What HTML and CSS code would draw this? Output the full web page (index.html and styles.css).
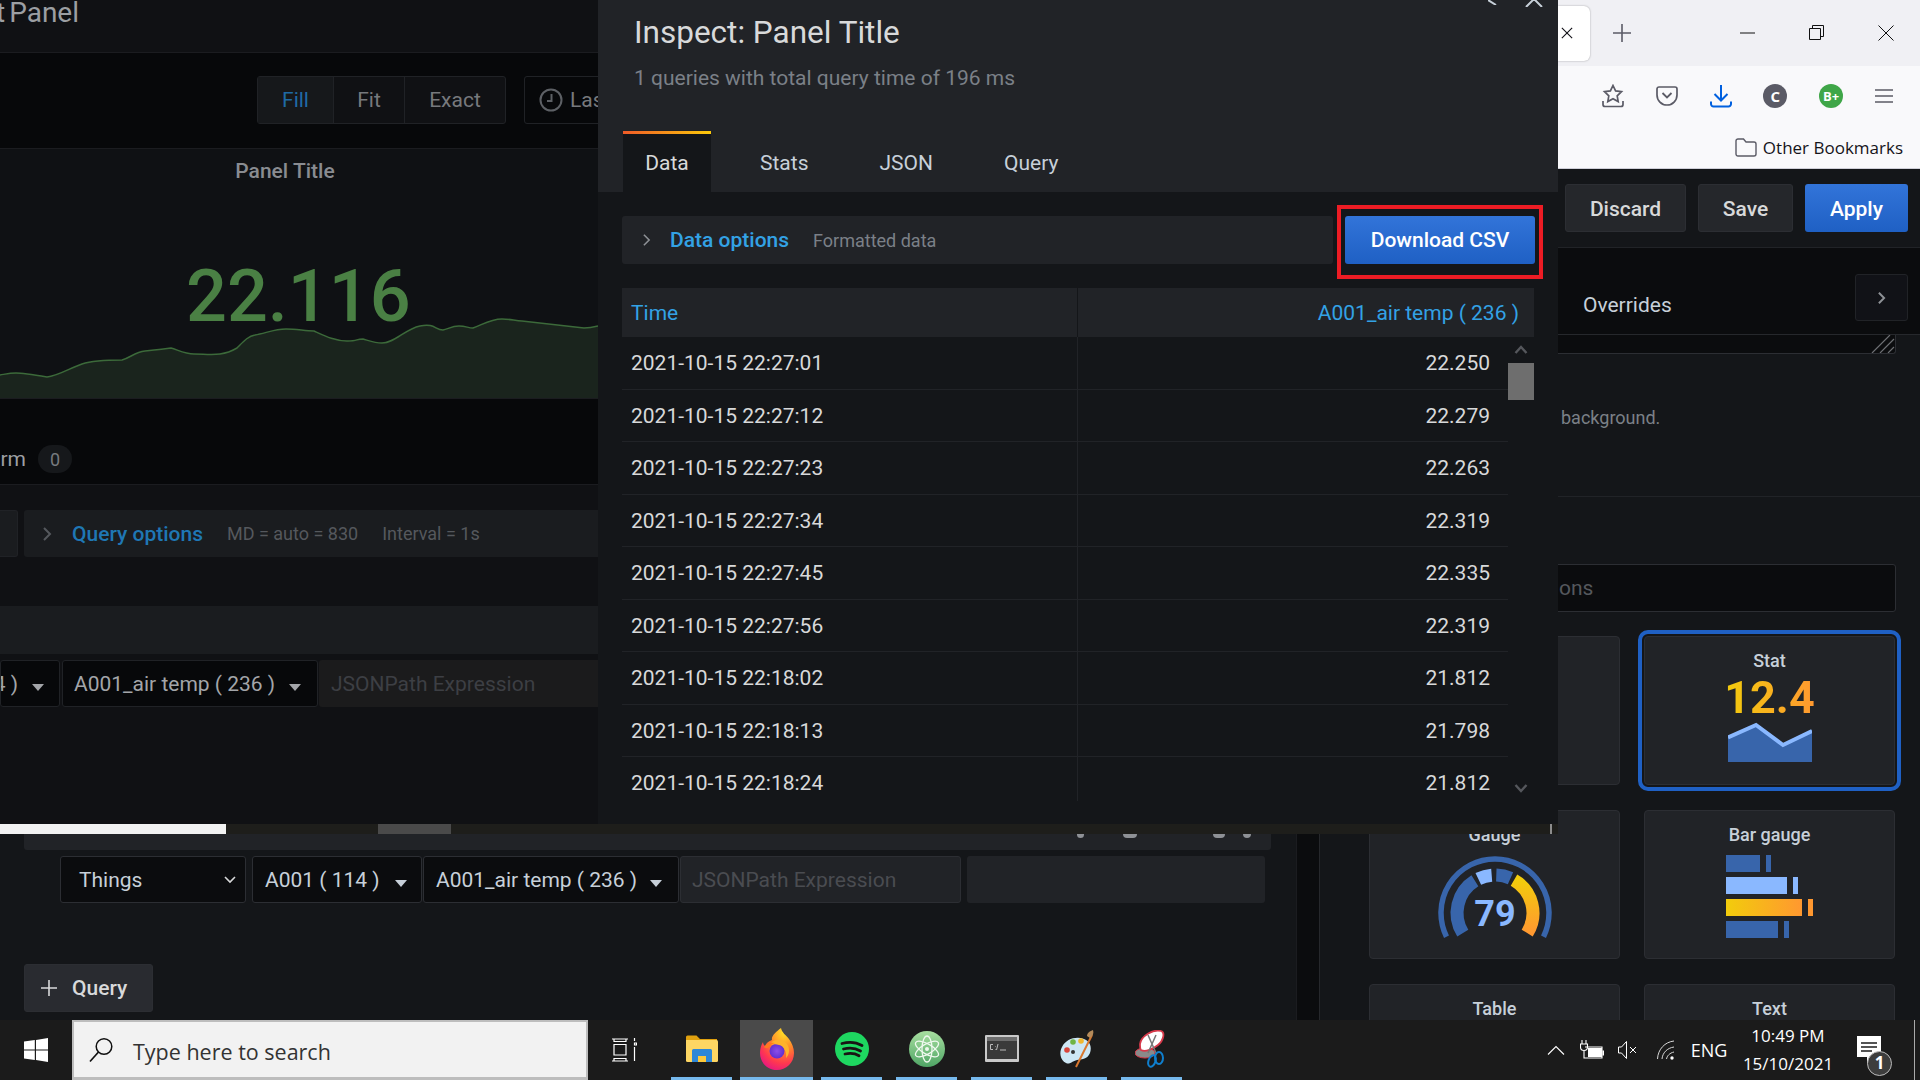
FILE: index.html
```html
<!DOCTYPE html>
<html lang="en">
<head>
<meta charset="utf-8">
<title>Inspect: Panel Title</title>
<link rel="stylesheet" href="styles.css">
</head>
<body>
<div class="desktop">

  <section class="win dim-pane">
    <header class="dim-head"><h1 class="dim-title">t Panel</h1></header>
    <div class="dim-toolbar">
      <div class="btn-group">
        <span class="seg seg-fill">Fill</span><span class="seg seg-fit">Fit</span><span class="seg seg-exact">Exact</span>
      </div>
      <div class="timepick">
        <svg class="ico-clock" viewBox="0 0 24 24" width="24" height="24"><circle cx="12" cy="12" r="10.500" fill="none" stroke="#5d6065" stroke-width="2"/><path d="M12.500 6v7H8" fill="none" stroke="#5d6065" stroke-width="2"/></svg>
        <span>Las</span>
      </div>
    </div>
    <div class="dim-panel">
      <div class="panel-title">Panel Title</div>
      <div class="panel-value">22.116</div>
      <svg class="spark" viewBox="0 0 598 100" width="598" height="100" preserveAspectRatio="none">
        <path fill="#1a241d" d="M0 77C6 76 10 75 16 75S35 77 47 79C58 78 70 70 82 66S110 62 122 62C130 60 135 54 145 53S165 51 171 50C178 52 185 56 194 56S212 57 220 56C228 55 232 53 237 50C243 44 248 38 255 37C266 35 275 31 286 31S305 33 314 33C325 38 335 43 347 43S355 41 363 41C370 43 375 45 382 45C395 45 405 31 420 28S435 32 443 32C448 31 452 28 459 28S468 30 473 30C482 27 490 21 502 21C510 21 516 23 522 23L584 30C590 30 594 29 598 28V100H0Z"/>
        <path fill="none" stroke="#3c6a3a" stroke-width="1.500" d="M0 77C6 76 10 75 16 75S35 77 47 79C58 78 70 70 82 66S110 62 122 62C130 60 135 54 145 53S165 51 171 50C178 52 185 56 194 56S212 57 220 56C228 55 232 53 237 50C243 44 248 38 255 37C266 35 275 31 286 31S305 33 314 33C325 38 335 43 347 43S355 41 363 41C370 43 375 45 382 45C395 45 405 31 420 28S435 32 443 32C448 31 452 28 459 28S468 30 473 30C482 27 490 21 502 21C510 21 516 23 522 23L584 30C590 30 594 29 598 28"/>
      </svg>
    </div>
    <div class="dim-tabs">
      <span class="dim-tab-label">rm</span><span class="dim-badge">0</span>
    </div>
    <div class="dim-body">
      <div class="dim-opts">
        <div class="dim-stub"></div>
        <div class="dim-optbar">
          <svg class="ico-chev" viewBox="0 0 10 16" width="10" height="16"><path d="M2 2l6 6-6 6" fill="none" stroke="#55585d" stroke-width="2"/></svg>
          <span class="dim-link">Query options</span>
          <span class="dim-meta">MD = auto = 830</span>
          <span class="dim-meta">Interval = 1s</span>
        </div>
      </div>
      <div class="dim-strip"></div>
      <div class="dim-selects">
        <div class="sel dim-sel sel-a"><span class="sel-text">4 )</span><i class="caret"></i></div>
        <div class="sel dim-sel sel-b"><span class="sel-text">A001_air temp ( 236 )</span><i class="caret"></i></div>
        <div class="dim-json">JSONPath Expression</div>
      </div>
    </div>
  </section>

  <section class="win low-pane">
    <div class="low-strip">
      <span class="frag frag-a"></span><span class="frag frag-b"></span><span class="frag frag-c"></span><span class="frag frag-d"></span>
    </div>
    <div class="low-row">
      <div class="sel low-things"><span class="sel-text">Things</span>
        <svg viewBox="0 0 12 8" width="12" height="8"><path d="M1 1l5 5 5-5" fill="none" stroke="#d8d9da" stroke-width="1.600"/></svg>
      </div>
      <div class="sel low-a"><span class="sel-text">A001 ( 114 )</span><i class="caret"></i></div>
      <div class="sel low-b"><span class="sel-text">A001_air temp ( 236 )</span><i class="caret"></i></div>
      <div class="low-json">JSONPath Expression</div>
      <div class="low-empty"></div>
    </div>
    <button class="btn-query" type="button">
      <svg viewBox="0 0 18 18" width="18" height="18"><path d="M9 1v16M1 9h16" stroke="#d8d9da" stroke-width="1.600"/></svg>
      <span>Query</span>
    </button>
  </section>

  <div class="win gutter"></div>

  <aside class="win right-pane">
    <div class="rp-actions">
      <span class="btn btn-sec btn-discard">Discard</span>
      <span class="btn btn-sec btn-save">Save</span>
      <span class="btn btn-pri btn-apply">Apply</span>
    </div>
    <div class="rp-tabs">
      <span class="rp-tab">Overrides</span>
      <span class="rp-tabbtn"><svg viewBox="0 0 10 16" width="9" height="14"><path d="M2 2l6 6-6 6" fill="none" stroke="#8e9196" stroke-width="2.200"/></svg></span>
    </div>
    <div class="rp-resize">
      <svg viewBox="0 0 24 18" width="24" height="18"><path d="M1 18L19 0M9 18L23 4M17 18l6-6" stroke="#6d6f73" stroke-width="1.200"/></svg>
    </div>
    <p class="rp-note">background.</p>
    <div class="rp-rule"></div>
    <div class="rp-search"><span>ons</span></div>
    <div class="cards">
      <div class="card"></div>
      <div class="card card-on">
        <div class="card-title">Stat</div>
        <div class="stat-num">12.4</div>
        <svg viewBox="0 0 84 40" width="84" height="40" class="stat-chart"><path fill="#3865ab" d="M0 14L28 2 55 22 84 8V40H0Z"/><path fill="none" stroke="#8ab8ff" stroke-width="4" d="M0 15.500L28 3 55 23 84 9"/></svg>
      </div>
      <div class="card">
        <div class="card-title">Gauge</div>
        <svg class="gauge" viewBox="0 0 120 90" width="120" height="90">
          <defs><linearGradient id="gg" x1="0" y1="0" x2="0" y2="1"><stop offset="0" stop-color="#f2cc0c"/><stop offset="1" stop-color="#ff9830"/></linearGradient></defs>
          <path d="M11.500 80.700A54 54 0 1 1 108.500 80.700" fill="none" stroke="#3865ab" stroke-width="5.500"/>
          <path d="M27.800 77.100A38 38 0 0 1 39.900 24.800" fill="none" stroke="#3865ab" stroke-width="13"/>
          <path d="M43.300 22.800A38 38 0 0 1 56.700 19.200" fill="none" stroke="#8ab8ff" stroke-width="13"/>
          <path d="M61.300 19A38 38 0 0 1 75.500 22.300" fill="none" stroke="#3865ab" stroke-width="13"/>
          <path d="M79 24.100A38 38 0 0 1 92.200 77.100" fill="none" stroke="url(#gg)" stroke-width="13"/>
          <text x="60" y="70" text-anchor="middle" class="gauge-num">79</text>
        </svg>
      </div>
      <div class="card">
        <div class="card-title">Bar gauge</div>
        <div class="bars">
          <div class="bar-row"><span class="bar b-blue b1"></span><span class="tick b-blue"></span></div>
          <div class="bar-row"><span class="bar b-light b2"></span><span class="tick b-light"></span></div>
          <div class="bar-row"><span class="bar b-warm b3"></span><span class="tick b-orange"></span></div>
          <div class="bar-row"><span class="bar b-blue b4"></span><span class="tick b-blue"></span></div>
        </div>
      </div>
      <div class="card"><div class="card-title">Table</div></div>
      <div class="card"><div class="card-title">Text</div></div>
    </div>
  </aside>

  <section class="win chrome">
    <div class="ch-tabs">
      <div class="ch-tab"><svg viewBox="0 0 14 14" width="12" height="12"><path d="M1 1l12 12M13 1L1 13" stroke="#15141a" stroke-width="1.300"/></svg></div>
      <svg class="ch-plus" viewBox="0 0 18 18" width="18" height="18"><path d="M9 0v18M0 9h18" stroke="#5b5b66" stroke-width="1.600"/></svg>
      <div class="ch-winctl">
        <svg viewBox="0 0 16 16" width="16" height="16"><path d="M0 8h15" stroke="#111" stroke-width="1"/></svg>
        <svg viewBox="0 0 16 16" width="16" height="16"><path d="M3.500 3V.5h11v11H12M.5 3.500h11v11H.5z" fill="none" stroke="#111" stroke-width="1"/></svg>
        <svg viewBox="0 0 16 16" width="16" height="16"><path d="M.5.5l15 15M15.500.5L.5 15.500" stroke="#111" stroke-width="1"/></svg>
      </div>
    </div>
    <div class="ch-tools">
      <div class="ch-icons">
        <svg viewBox="0 0 22 24" width="22" height="24"><path d="M11 1.500l2.600 5.400 5.900.8-4.300 4.100 1 5.800-5.200-2.800-5.200 2.800 1-5.800L2.500 7.700l5.900-.8z" fill="none" stroke="#5b5b66" stroke-width="1.700"/><path d="M1 17v3.500a2 2 0 0 0 2 2h16a2 2 0 0 0 2-2V17" fill="none" stroke="#5b5b66" stroke-width="1.700"/></svg>
        <svg viewBox="0 0 22 20" width="22" height="20"><path d="M3 1h16a2 2 0 0 1 2 2v6a10 10 0 0 1-20 0V3a2 2 0 0 1 2-2z" fill="none" stroke="#5b5b66" stroke-width="1.700"/><path d="M6.500 7l4.500 4.500L15.500 7" fill="none" stroke="#5b5b66" stroke-width="1.800"/></svg>
        <svg viewBox="0 0 22 24" width="22" height="24"><path d="M11 1v15M4.500 10l6.500 6.500 6.500-6.500" fill="none" stroke="#0060df" stroke-width="2"/><path d="M1 17.500v2.500a2.500 2.500 0 0 0 2.500 2.500h15a2.500 2.500 0 0 0 2.500-2.500v-2.500" fill="none" stroke="#0060df" stroke-width="2"/></svg>
        <span class="ext ext-c">C</span>
        <span class="ext ext-b">B+</span>
        <svg viewBox="0 0 18 14" width="18" height="14"><path d="M0 1h18M0 7h18M0 13h18" stroke="#5b5b66" stroke-width="1.700"/></svg>
      </div>
      <div class="ch-bookmarks">
        <svg viewBox="0 0 22 19" width="22" height="19"><path d="M3 1h5.500l2.500 3h8a2 2 0 0 1 2 2v10a2 2 0 0 1-2 2H3a2 2 0 0 1-2-2V3a2 2 0 0 1 2-2z" fill="none" stroke="#5b5b66" stroke-width="1.400"/></svg>
        <span>Other Bookmarks</span>
      </div>
    </div>
  </section>

  <section class="win drawer">
    <header class="dr-head">
      <div class="dr-ctl">
        <svg viewBox="0 0 9 5" width="9" height="5"><path d="M0 0l8 5" fill="none" stroke="#c7d0d9" stroke-width="2"/></svg>
        <svg viewBox="0 0 18 7" width="18" height="7"><path d="M1 7l8-8 8 8" fill="none" stroke="#c7d0d9" stroke-width="2"/></svg>
      </div>
      <h2 class="dr-title">Inspect: Panel Title</h2>
      <p class="dr-sub">1 queries with total query time of 196 ms</p>
      <nav class="dr-tabs">
        <span class="dr-tab dr-tab-on">Data</span>
        <span class="dr-tab">Stats</span>
        <span class="dr-tab">JSON</span>
        <span class="dr-tab">Query</span>
      </nav>
    </header>
    <div class="dr-body">
      <div class="dr-opts">
        <div class="dr-optbar">
          <svg viewBox="0 0 10 16" width="9" height="14"><path d="M2 2l6 6-6 6" fill="none" stroke="#8e9196" stroke-width="1.800"/></svg>
          <span class="dr-link">Data options</span>
          <span class="dr-meta">Formatted data</span>
        </div>
        <div class="dr-hl"><span class="btn-csv">Download CSV</span></div>
      </div>
      <div class="tbl">
        <div class="tr th"><span class="td td-time">Time</span><span class="td td-val">A001_air temp ( 236 )</span></div>
        <div class="rows">
          <div class="tr"><span class="td td-time">2021-10-15 22:27:01</span><span class="td td-val">22.250</span></div>
          <div class="tr"><span class="td td-time">2021-10-15 22:27:12</span><span class="td td-val">22.279</span></div>
          <div class="tr"><span class="td td-time">2021-10-15 22:27:23</span><span class="td td-val">22.263</span></div>
          <div class="tr"><span class="td td-time">2021-10-15 22:27:34</span><span class="td td-val">22.319</span></div>
          <div class="tr"><span class="td td-time">2021-10-15 22:27:45</span><span class="td td-val">22.335</span></div>
          <div class="tr"><span class="td td-time">2021-10-15 22:27:56</span><span class="td td-val">22.319</span></div>
          <div class="tr"><span class="td td-time">2021-10-15 22:18:02</span><span class="td td-val">21.812</span></div>
          <div class="tr"><span class="td td-time">2021-10-15 22:18:13</span><span class="td td-val">21.798</span></div>
          <div class="tr tr-last"><span class="td td-time">2021-10-15 22:18:24</span><span class="td td-val">21.812</span></div>
        </div>
        <div class="vscroll">
          <svg viewBox="0 0 14 9" width="14" height="9" class="vs-up"><path d="M1.500 8L7 2l5.500 6" fill="none" stroke="#55575c" stroke-width="2.400"/></svg>
          <div class="vs-thumb"></div>
          <svg viewBox="0 0 14 9" width="14" height="9" class="vs-down"><path d="M1.500 1L7 7l5.500-6" fill="none" stroke="#55575c" stroke-width="2.400"/></svg>
        </div>
      </div>
    </div>
  </section>

  <div class="win hscroll">
    <span class="hs-white"></span><span class="hs-dark hs-d1"></span><span class="hs-thumb"></span><span class="hs-dark hs-d2"></span><span class="hs-tick"></span><span class="hs-end"></span>
  </div>
</div>

<footer class="taskbar">
  <div class="tb-start">
    <svg viewBox="0 0 24 24" width="24" height="24"><path fill="#fff" d="M0 3.600l10.800-1.500v9.300H0zM12 1.900L24 0v11.400H12zM0 12.600h10.800v9.300L0 20.400zM12 12.600h12V24l-12-1.900z"/></svg>
  </div>
  <div class="tb-search">
    <svg viewBox="0 0 24 26" width="24" height="26"><circle cx="15" cy="9.500" r="7.800" fill="none" stroke="#111" stroke-width="1.500"/><path d="M9.500 15L1 24.500" stroke="#111" stroke-width="1.700"/></svg>
    <span>Type here to search</span>
  </div>
  <div class="tb-view">
    <svg viewBox="0 0 26 24" width="26" height="24"><path d="M1 1h16M3 .5v3h12v-3M3 6.500h12V17H3zM1 23h16M3 23.500v-3h12v3" fill="none" stroke="#fff" stroke-width="1.200"/><path d="M23.500 0v3M23.500 5h2v2h-2zM23.500 9v14" fill="none" stroke="#fff" stroke-width="1.200"/></svg>
  </div>
  <div class="tb-apps">
    <div class="app"><div class="app-ico">
      <svg viewBox="0 0 32 27" width="32" height="27"><path fill="#e0a10f" d="M0 2a1.500 1.500 0 0 1 1.500-1.500h9L14 4h17v3H0z"/><path fill="#fdd663" d="M0 5h30.500A1.500 1.500 0 0 1 32 6.500v19a1.500 1.500 0 0 1-1.500 1.500H1.500A1.500 1.500 0 0 1 0 25.500z"/><path fill="#2d87d6" d="M6 27V15.500A1.500 1.500 0 0 1 7.500 14h17a1.500 1.500 0 0 1 1.500 1.500V27h-6v-6h-8v6z"/><path fill="#fdc93b" d="M12 21h8v6h-8z"/></svg>
    </div><i class="app-bar"></i></div>
    <div class="app app-on"><div class="app-ico">
      <svg viewBox="0 0 34 42" width="34" height="42">
        <defs>
          <radialGradient id="ff1" cx="0.7" cy="0.1" r="1"><stop offset="0" stop-color="#ffe226"/><stop offset=".4" stop-color="#ff8a2a"/><stop offset=".75" stop-color="#ff3750"/><stop offset="1" stop-color="#e31587"/></radialGradient>
          <radialGradient id="ff2" cx="0.5" cy="0.5" r="0.6"><stop offset="0" stop-color="#8b4ee8"/><stop offset="1" stop-color="#592acb"/></radialGradient>
        </defs>
        <path fill="url(#ff1)" d="M21 0c1 5 5 7 8 11 3 4 5 9 5 14 0 10-8 17-17 17S0 35 0 25c0-4 1-8 3-11 0 2 1 3 2 4 1-3 4-5 7-6-1-4 4-8 9-12z"/>
        <circle cx="17" cy="23" r="7.500" fill="url(#ff2)"/>
        <path fill="#ffb32b" d="M12 14c5-4 13-3 16 4 2 4 1 9-2 12 1-6-2-12-7-13-3-1-5-1-8 0 0-1 0-2 1-3z"/>
        <path fill="#ff7a1f" d="M4 19c3-4 7-5 11-4-3 1-5 2-6 4-2 2-4 1-5 0z"/>
      </svg>
    </div><i class="app-bar"></i></div>
    <div class="app"><div class="app-ico">
      <svg viewBox="0 0 34 34" width="34" height="34"><circle cx="17" cy="17" r="17" fill="#1ed760"/><path d="M7 11.500c7-2 14-1.500 20 2M8.500 17c6-1.500 12-1 17 2M10 22c5-1 10-.7 14 1.700" fill="none" stroke="#191414" stroke-width="2.800" stroke-linecap="round"/></svg>
    </div><i class="app-bar"></i></div>
    <div class="app"><div class="app-ico">
      <svg viewBox="0 0 36 36" width="36" height="36">
        <defs><linearGradient id="at" x1="0" y1="0" x2="0" y2="1"><stop offset="0" stop-color="#a8dfa0"/><stop offset="1" stop-color="#4fa565"/></linearGradient></defs>
        <circle cx="18" cy="18" r="18" fill="url(#at)"/>
        <g fill="none" stroke="#eef8ee" stroke-width="1.300"><ellipse cx="18" cy="18" rx="13" ry="5" transform="rotate(30 18 18)"/><ellipse cx="18" cy="18" rx="13" ry="5" transform="rotate(-30 18 18)"/><ellipse cx="18" cy="18" rx="13" ry="5" transform="rotate(90 18 18)"/></g>
        <circle cx="18" cy="18" r="2" fill="#eef8ee"/>
      </svg>
    </div><i class="app-bar"></i></div>
    <div class="app"><div class="app-ico">
      <svg viewBox="0 0 34 27" width="34" height="27"><rect width="34" height="27" rx="1" fill="#c9c9c9"/><rect x="2" y="2" width="30" height="22" fill="#3a3a3a"/><rect x="2" y="2" width="30" height="4" fill="#6d6d6d"/><path d="M8 9.500H5.500v5H8M10.500 11v.5M10.500 14v.5M13 9l-1.500 6M15 15h6" fill="none" stroke="#bbb" stroke-width="1"/></svg>
    </div><i class="app-bar"></i></div>
    <div class="app"><div class="app-ico">
      <svg viewBox="0 0 36 38" width="36" height="38"><path fill="#cde7f5" d="M3 17C7 9 17 6 25 9c6 2 8 8 6 14-3 7-9 6-13 7-5 1-7 5-11 3-6-3-7-11-4-16z"/><circle cx="8" cy="20" r="2.800" fill="#d9453b"/><circle cx="14" cy="12" r="2.800" fill="#6fb544"/><circle cx="22" cy="11" r="2.800" fill="#f1b72e"/><circle cx="14" cy="22" r="2" fill="#333"/><path d="M33 5L17 37" stroke="#d9772e" stroke-width="2"/><path d="M34 0c1 3 0 6-3 8l-3-2c0-3 3-5 6-6z" fill="#b58b5a"/></svg>
    </div><i class="app-bar"></i></div>
    <div class="app"><div class="app-ico">
      <svg viewBox="0 0 34 38" width="34" height="38"><ellipse cx="10" cy="23" rx="10" ry="5" fill="#8a8a8a" stroke="#d6394a"/><path d="M5 14C6 6 18 -1 26 1c4 1 3 9-3 14s-13 7-17 5c-1-1-1-4-1-6z" fill="#fff" stroke="#d6394a" stroke-width="1.800"/><path d="M13 5l8 18M21 5l-8 18" stroke="#777" stroke-width="1.500"/><ellipse cx="24" cy="28" rx="4" ry="6" fill="none" stroke="#0f7fce" stroke-width="2"/><ellipse cx="17" cy="31" rx="3.500" ry="6" fill="none" stroke="#0f7fce" stroke-width="2" transform="rotate(20 17 31)"/></svg>
    </div><i class="app-bar"></i></div>
  </div>
  <div class="tb-tray">
    <div class="tray-i t-chev"><svg viewBox="0 0 18 10" width="18" height="10"><path d="M1 9.500l8-8 8 8" fill="none" stroke="#fff" stroke-width="1.100"/></svg></div>
    <div class="tray-i t-bat"><svg viewBox="0 0 24 20" width="24" height="20"><path d="M2 0v4M6 0v4M.5 4h7v3a3.500 3.500 0 0 1-7 0zM4 10v3" fill="none" stroke="#fff" stroke-width="1.100"/><path d="M5 7h17v11H4v-5" fill="none" stroke="#fff" stroke-width="1.100"/><rect x="8" y="8" width="14" height="9" fill="#fff"/><rect x="22.500" y="10.500" width="1.500" height="5" fill="#fff"/></svg></div>
    <div class="tray-i t-spk"><svg viewBox="0 0 20 18" width="20" height="18"><path d="M.5 6h3l5-5.500v17l-5-5.500h-3z" fill="none" stroke="#fff" stroke-width="1"/><path d="M12 6l6 6M18 6l-6 6" stroke="#fff" stroke-width="1"/></svg></div>
    <div class="tray-i t-wifi"><svg viewBox="0 0 18 20" width="18" height="20"><path d="M.5 19C1 9 8 2 17 1M5 19c.5-6 5-11 12-12M9.500 19c.5-3 3-6 7.500-7" fill="none" stroke="#d8d8d8" stroke-width="1"/><circle cx="15" cy="18" r="1.700" fill="#fff"/></svg></div>
    <div class="tray-t t-eng">ENG</div>
    <div class="tray-clock"><span>10:49 PM</span><span>15/10/2021</span></div>
    <div class="tray-notif">
      <svg viewBox="0 0 24 28" width="24" height="28"><path fill="#fff" d="M0 0h24v21h-8l-6 7v-7H0z"/><path d="M4 7h16M4 11h16M4 15h11" stroke="#1c1c1c" stroke-width="1.300"/></svg>
      <span class="notif-badge">1</span>
    </div>
    <div class="tray-line"></div>
  </div>
</footer>
</body>
</html>
```

FILE: styles.css
```css
* { box-sizing: border-box; }
html, body { margin: 0; padding: 0; width: 1920px; height: 1080px; overflow: hidden; }
body { display: flex; flex-direction: column; font-family: Roboto, "Liberation Sans", sans-serif; background: #141619; color: #c7d0d9; }
h1, h2, p { margin: 0; font-weight: 400; }

.desktop { position: relative; height: 1020px; flex: none; overflow: hidden; background: #141619; }
.win { position: absolute; overflow: hidden; }

/* dimmed panel editor, upper left */
.dim-pane { left: 0; top: 0; width: 598px; height: 824px; display: flex; flex-direction: column; background: #101114; }
.dim-head { height: 52px; flex: none; display: flex; justify-content: flex-end; width: 79px; }
.dim-title { font-size: 28px; line-height: 26px; color: #9c9fa3; white-space: nowrap; word-spacing: -3px; }
.dim-toolbar { height: 97px; flex: none; border-top: 1px solid #1b1c20; border-bottom: 1px solid #1b1c20; background: #07080a; display: flex; align-items: flex-start; padding: 23px 0 0 257px; gap: 18px; }
.btn-group { display: flex; width: 249px; height: 48px; flex: none; border: 1px solid #202226; border-radius: 3px; background: #101114; }
.seg { display: flex; align-items: center; justify-content: center; font-size: 21px; color: #77797d; border-right: 1px solid #202226; }
.seg-fill { width: 76px; background: #16181b; color: #1f6aa5; }
.seg-fit { width: 71px; }
.seg-exact { flex: 1; border-right: 0; }
.timepick { width: 200px; height: 48px; flex: none; border: 1px solid #202226; border-radius: 3px; display: flex; align-items: center; gap: 7px; padding-left: 14px; font-size: 21px; color: #77797d; white-space: nowrap; }
.dim-panel { height: 249px; flex: none; background: #0f1114; display: flex; flex-direction: column; position: relative; }
.panel-title { font-size: 21px; font-weight: 500; color: #898c91; text-align: center; width: 570px; line-height: 24px; margin-top: 10px; }
.panel-value { font-size: 72px; font-weight: 500; color: #4a8044; line-height: 84px; margin-top: 72px; padding-left: 186px; white-space: nowrap; position: relative; z-index: 1; }
.spark { position: absolute; left: 0; bottom: 0; display: block; }
.dim-tabs { height: 87px; flex: none; background: #07080a; border-top: 1px solid #1b1c20; border-bottom: 1px solid #1b1c20; display: flex; align-items: center; justify-content: flex-start; padding-top: 35px; }
.dim-tab-label { width: 26px; flex: none; display: flex; justify-content: flex-end; font-size: 21px; color: #9c9fa3; }
.dim-badge { margin-left: 12px; width: 34px; height: 28px; border-radius: 14px; background: #16181b; color: #777a7f; font-size: 18px; display: flex; align-items: center; justify-content: center; }
.dim-body { flex: 1; padding-top: 25px; display: flex; flex-direction: column; }
.dim-opts { display: flex; gap: 6px; height: 47px; flex: none; }
.dim-stub { width: 18px; background: #1a1c1f; border-radius: 0 3px 3px 0; border: 1px solid #202226; border-left: 0; }
.dim-optbar { flex: 1; background: #1a1c1f; border-radius: 3px 0 0 3px; display: flex; align-items: center; padding-left: 18px; }
.ico-chev { flex: none; }
.dim-link { margin-left: 20px; font-size: 21px; font-weight: 500; color: #1f77b4; white-space: nowrap; }
.dim-meta { font-size: 18px; color: #55585d; margin-left: 24px; white-space: nowrap; }
.dim-strip { height: 48px; flex: none; margin-top: 49px; background: #1a1c1f; }
.dim-selects { margin-top: 6px; height: 47px; flex: none; display: flex; }
.sel { display: flex; align-items: center; justify-content: space-between; background: #07080a; border: 1px solid #202226; border-radius: 3px; font-size: 21px; color: #a3a5a9; white-space: nowrap; overflow: hidden; }
.caret { width: 0; height: 0; flex: none; border-left: 6px solid transparent; border-right: 6px solid transparent; border-top: 7px solid #a3a5a9; margin-top: 7px; }
.dim-sel { height: 47px; }
.sel-a { width: 60px; padding-right: 15px; justify-content: flex-end; gap: 14px; }
.sel-a .sel-text { flex: none; }
.sel-b { width: 256px; margin-left: 2px; padding: 0 16px 0 11px; }
.dim-json { flex: 1; background: #1b1b1c; border-radius: 3px 0 0 3px; padding-left: 12px; font-size: 21px; line-height: 48px; color: #3d3f44; white-space: nowrap; margin-left: 1px; }

/* lower left */
.low-pane { left: 0; top: 834px; width: 1296px; height: 186px; background: #141619; padding-left: 24px; display: flex; flex-direction: column; }
.low-strip { height: 16px; flex: none; width: 1247px; background: #212327; border-radius: 0 0 3px 3px; display: flex; align-items: flex-start; }
.frag { height: 4px; background: #8e9196; flex: none; border-radius: 0 0 4px 4px; }
.frag-a { width: 7px; margin-left: 1053px; }
.frag-b { width: 14px; margin-left: 39px; }
.frag-c { width: 12px; margin-left: 76px; }
.frag-d { width: 8px; margin-left: 18px; }
.low-row { margin: 6px 0 0 36px; height: 47px; display: flex; flex: none; }
.low-row .sel { height: 47px; background: #0b0c0e; border-color: #2c2e33; color: #c7d0d9; }
.low-things { width: 186px; padding: 0 9px 0 18px; }
.low-a { width: 170px; margin-left: 6px; padding: 0 14px 0 12px; }
.low-b { width: 256px; margin-left: 1px; padding: 0 16px 0 12px; }
.low-row .caret { border-top-color: #c7d0d9; }
.low-json { width: 281px; margin-left: 1px; background: #212327; border: 1px solid #2c2e33; border-radius: 3px; font-size: 21px; line-height: 46px; color: #4a4c51; padding-left: 11px; }
.low-empty { width: 298px; margin-left: 6px; background: #212327; border-radius: 3px; }
.btn-query { margin-top: 61px; width: 129px; height: 48px; flex: none; background: #292b30; border: 1px solid #2c2e33; border-radius: 3px; display: flex; align-items: center; gap: 14px; padding: 0 0 0 15px; font: 500 21px Roboto, sans-serif; color: #d8d9da; }

.gutter { left: 1296px; top: 834px; width: 24px; height: 186px; background: #0b0c0e; border-left: 1px solid #1b1c20; border-right: 1px solid #26282c; }

/* right option pane */
.right-pane { left: 1320px; top: 169px; width: 600px; height: 851px; background: #141619; }
.rp-actions { height: 79px; display: flex; justify-content: flex-end; align-items: flex-start; padding: 15px 12px 0 0; border-bottom: 1px solid #212327; }
.btn { height: 48px; display: flex; align-items: center; justify-content: center; padding-top: 2px; font-size: 21px; font-weight: 500; border-radius: 3px; flex: none; }
.btn-sec { background: #25272b; border: 1px solid #2c2e33; color: #d8d9da; }
.btn-discard { width: 121px; }
.btn-save { width: 95px; margin-left: 12px; }
.btn-apply { width: 103px; margin-left: 12px; }
.btn-pri { background: linear-gradient(#3274d9, #1f60c4); color: #fff; }
.rp-tabs { height: 87px; background: #0b0c0e; border-bottom: 1px solid #26282c; display: flex; justify-content: space-between; align-items: flex-start; padding: 26px 12px 0 263px; }
.rp-tab { font-size: 21px; line-height: 48px; color: #c7d0d9; margin-top: 7px; }
.rp-tabbtn { width: 53px; height: 47px; border: 1px solid #212327; border-radius: 3px; background: #111217; display: flex; align-items: center; justify-content: center; }
.rp-resize { height: 19px; width: 576px; background: #0b0c0e; border: 1px solid #2c2e33; border-top: 0; border-radius: 0 0 3px 3px; display: flex; justify-content: flex-end; overflow: hidden; }
.rp-note { height: 142px; padding: 52px 0 0 241px; font-size: 18px; line-height: 24px; color: #7b8087; white-space: nowrap; }
.rp-rule { height: 1px; background: #212327; }
.rp-search { margin: 67px 24px 0 49px; height: 48px; background: #0b0c0e; border: 1px solid #2c2e33; border-radius: 3px; font-size: 21px; line-height: 46px; color: #55585d; padding-left: 189px; }
.cards { margin: 24px 25px 0 49px; display: grid; grid-template-columns: 251px 251px; grid-auto-rows: 149px; column-gap: 24px; row-gap: 25px; }
.card { background: #212327; border: 1px solid #2c2e33; border-radius: 4px; display: flex; flex-direction: column; align-items: center; }
.card-on { outline: 4px solid #1f60c4; outline-offset: 2px; }
.card-title { font-size: 18px; font-weight: 500; line-height: 22px; color: #c7d0d9; margin-top: 13px; }
.stat-num { font-size: 45px; font-weight: 700; line-height: 46px; margin-top: 3px; background: linear-gradient(90deg, #f2cc0c, #ff9830); -webkit-background-clip: text; background-clip: text; color: transparent; }
.stat-chart { display: block; margin-top: 1px; }
.gauge { display: block; margin-top: 10px; }
.gauge-num { font: 700 36px Roboto, sans-serif; fill: #8ab8ff; }
.bars { width: 88px; margin-top: 9px; display: flex; flex-direction: column; gap: 5px; }
.bar-row { display: flex; height: 17px; gap: 6px; }
.bar { display: block; height: 100%; }
.tick { display: block; width: 5px; height: 100%; }
.b-blue { background: #3865ab; }
.b-light { background: #8ab8ff; }
.b-warm { background: linear-gradient(90deg, #f2cc0c, #ff9830); }
.b-orange { background: #ff9830; }
.b1 { width: 34px; }
.b2 { width: 61px; }
.b3 { width: 76px; }
.b4 { width: 52px; }

/* browser chrome */
.chrome { left: 1558px; top: 0; width: 362px; height: 169px; background: #f9f9fb; display: flex; flex-direction: column; border-bottom: 1px solid #cfcfd8; }
.ch-tabs { height: 66px; flex: none; background: #f0f0f4; display: flex; align-items: center; }
.ch-tab { width: 32px; height: 55px; background: #fff; border-radius: 0 6px 6px 0; box-shadow: 0 0 2px rgba(0,0,0,.35); display: flex; align-items: center; padding-left: 3px; }
.ch-plus { margin-left: 23px; flex: none; }
.ch-winctl { margin-left: auto; display: flex; gap: 53px; padding-right: 26px; }
.ch-tools { flex: 1; display: flex; flex-direction: column; align-items: flex-end; }
.ch-icons { display: flex; align-items: center; height: 60px; width: 320px; justify-content: space-between; padding: 0 27px 0 2px; }
.ext { width: 24px; height: 24px; border-radius: 50%; display: flex; align-items: center; justify-content: center; color: #fff; font-weight: 700; font-family: "Open Sans", sans-serif; }
.ext-c { background: #5b5b66; font-size: 15px; }
.ext-b { background: #3fa648; font-size: 13px; }
.ch-bookmarks { display: flex; align-items: center; gap: 6px; height: 42px; padding: 0 17px 0 0; font: 17px "Open Sans", "Liberation Sans", sans-serif; color: #15141a; white-space: nowrap; }

/* inspect drawer */
.drawer { left: 598px; top: 0; width: 960px; height: 824px; display: flex; flex-direction: column; background: #141619; }
.dr-head { height: 192px; flex: none; background: #212327; padding: 0 0 0 36px; position: relative; display: flex; flex-direction: column; }
.dr-ctl { position: absolute; top: 0; right: 15px; display: flex; gap: 28px; align-items: flex-start; }
.dr-title { font-size: 31.500px; line-height: 36px; margin-top: 15px; color: #d8d9da; white-space: nowrap; }
.dr-sub { font-size: 21px; line-height: 28px; margin-top: 13px; color: #7b8087; white-space: nowrap; }
.dr-tabs { margin: 39px 0 0 -11px; display: flex; height: 61px; align-items: stretch; }
.dr-tab { font-size: 21px; color: #c7d0d9; display: flex; align-items: center; padding-top: 2px; }
.dr-tab-on { width: 88px; justify-content: center; background: #141619; color: #d8d9da; border-top: 3px solid transparent; border-image: linear-gradient(90deg, #f05a28, #fbca0a) 1; margin-right: 49px; padding-top: 0; }
.dr-tab:nth-child(2) { margin-right: 71px; }
.dr-tab:nth-child(3) { margin-right: 71px; }
.dr-body { flex: 1; position: relative; padding: 13px 24px 0; }
.dr-opts { display: flex; height: 74px; align-items: flex-start; }
.dr-optbar { width: 711px; height: 48px; margin-top: 11px; background: #212327; border-radius: 3px; display: flex; align-items: center; padding-left: 20px; flex: none; }
.dr-link { margin-left: 19px; font-size: 21px; font-weight: 500; color: #33a2e5; white-space: nowrap; }
.dr-meta { margin-left: 24px; font-size: 18px; color: #7b8087; white-space: nowrap; }
.dr-hl { width: 206px; height: 74px; margin-left: 4px; border: 4px solid #ed1c24; padding: 7px 0 0 4px; flex: none; }
.btn-csv { width: 190px; height: 48px; background: linear-gradient(#3274d9, #1f60c4); border-radius: 3px; color: #fff; font-size: 21px; font-weight: 500; display: flex; align-items: center; justify-content: center; }
.tbl { margin-top: 9px; width: 912px; position: relative; }
.tr { display: flex; height: 52.500px; width: 886px; border-bottom: 1px solid #212327; font-size: 21px; color: #d8d9da; }
.rows .td { padding-top: 1px; }
.tr-last { border-bottom: 0; height: 44px; }
.th { width: 912px; height: 49px; background: #212327; border-bottom: 0; color: #33a2e5; }
.td { display: flex; align-items: center; white-space: nowrap; }
.td-time { width: 456px; padding-left: 9px; border-right: 1px solid #212327; flex: none; }
.td-val { flex: 1; justify-content: flex-end; padding-right: 18px; }
.th .td-val { padding-right: 15px; }
.rows .tr-last .td { height: 44px; padding-top: 8px; }
.th .td-time { border-right-color: #141619; }
.vscroll { position: absolute; left: 886px; top: 49px; width: 26px; height: 470px; display: flex; flex-direction: column; align-items: center; }
.vs-up { margin-top: 8px; flex: none; }
.vs-thumb { width: 26px; height: 37px; margin-top: 9px; background: #6e6e6e; flex: none; }
.vs-down { margin-top: 384px; flex: none; }

.hscroll { left: 0; top: 824px; width: 1558px; height: 10px; display: flex; }
.hs-white { width: 226px; background: #f2f2f2; flex: none; }
.hs-dark { background: #1e1e1b; }
.hs-d1 { width: 152px; }
.hs-thumb { width: 73px; background: #4a4a4a; }
.hs-d2 { flex: 1; }
.hs-tick { width: 2px; background: #8c8c8c; }
.hs-end { width: 6px; background: #1e1e1b; }

/* taskbar */
.taskbar { height: 60px; flex: none; background: #1b1b1b; display: flex; align-items: stretch; }
.tb-start { width: 72px; display: flex; align-items: center; justify-content: center; }
.tb-search { width: 516px; background: #f2f2f2; border: 2px solid #bdbdbd; border-bottom: 3px solid #bdbdbd; display: flex; align-items: center; padding: 0 0 0 15px; gap: 20px; font: 21.500px "Open Sans", "Liberation Sans", sans-serif; color: #333; white-space: nowrap; }
.tb-search span { padding-top: 3px; }
.tb-view { width: 72px; display: flex; align-items: center; justify-content: center; }
.tb-apps { margin-left: 4px; display: flex; }
.app { width: 75px; display: flex; flex-direction: column; align-items: center; }
.app-ico { flex: 1; display: flex; align-items: center; justify-content: center; width: 100%; }
.app-bar { width: 61px; height: 3px; background: #76b9ed; flex: none; }
.app-on { background: #4a4a4a; width: 73px; margin: 0 1px; }
.app-on .app-bar { width: 100%; }
.tb-tray { margin-left: auto; display: flex; align-items: center; height: 100%; }
.tray-i { display: flex; align-items: center; justify-content: center; height: 60px; }
.t-chev { width: 36px; }
.t-bat { width: 36px; }
.t-spk { width: 35px; }
.t-wifi { width: 42px; }
.tray-t { font: 18px "Open Sans", "Liberation Sans", sans-serif; color: #fff; text-align: center; width: 44px; }
.tray-clock { width: 114px; display: flex; flex-direction: column; align-items: center; gap: 6px; font: 17px/22px "Open Sans", "Liberation Sans", sans-serif; color: #fff; white-space: nowrap; }
.tray-notif { width: 49px; height: 60px; display: flex; align-items: center; padding-left: 12px; position: relative; }
.notif-badge { position: absolute; left: 22px; top: 31px; width: 25px; height: 25px; border-radius: 50%; background: #3d3d3d; border: 1px solid #bbb; color: #fff; font: 700 17px/22px "Open Sans", sans-serif; text-align: center; }
.tray-line { width: 1px; height: 60px; margin: 0 5px 0 20px; background: #aaa; }
```
